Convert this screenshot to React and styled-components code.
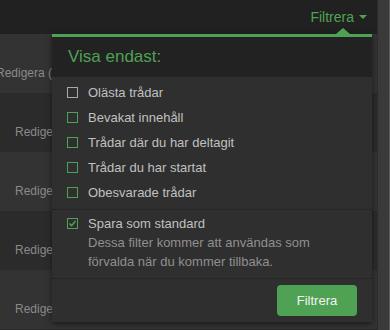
import React from "react";
import styled, { createGlobalStyle } from "styled-components";

const green = "#4fa153";

const GlobalStyle = createGlobalStyle`
  html, body {
    margin: 0;
    padding: 0;
    background: #2a2a2a;
    font-family: "Liberation Sans", Arial, sans-serif;
  }
`;

const Page = styled.div`
  width: 390px;
  height: 330px;
  display: flex;
  position: relative;
  overflow: hidden;
  background: #2a2a2a;
`;

const MainColumn = styled.div`
  flex: 1;
  display: flex;
  flex-direction: column;
  min-width: 0;
  overflow: hidden;
`;

const TopBar = styled.div`
  height: 34px;
  background: #212121;
  display: flex;
  align-items: center;
  justify-content: flex-end;
  padding-right: 10px;
  flex-shrink: 0;
`;

const FilterToggle = styled.span`
  color: ${green};
  font-size: 14px;
  display: flex;
  align-items: center;
  gap: 5px;
`;

const Caret = styled.span`
  width: 0;
  height: 0;
  border-left: 4px solid transparent;
  border-right: 4px solid transparent;
  border-top: 4px solid ${green};
`;

const Row = styled.div`
  height: 59px;
  flex-shrink: 0;
  box-sizing: border-box;
  background: ${({ alt }) => (alt ? "#2b2b2b" : "#333333")};
  padding-top: 31px;
  color: #8a8a8a;
  font-size: 12px;
  line-height: 16px;
  white-space: nowrap;
`;

const RowText = styled.span`
  display: inline-block;
  margin-left: ${({ indent }) => indent}px;
`;

const Scrollbar = styled.div`
  width: 11px;
  background: #3a3a3a;
  border-left: 1px solid #2c2c2c;
  border-right: 1px solid #5a5a5a;
`;

const Dropdown = styled.div`
  position: absolute;
  left: 52px;
  top: 34px;
  width: 320px;
  border-top: 3px solid ${green};
  background: #2f2f2f;
  box-shadow: 0 2px 6px rgba(0, 0, 0, 0.5);
`;

const Arrow = styled.span`
  position: absolute;
  right: 22px;
  top: -9px;
  width: 0;
  height: 0;
  border-left: 7px solid transparent;
  border-right: 7px solid transparent;
  border-bottom: 6px solid ${green};
`;

const Header = styled.div`
  background: #222222;
  color: ${green};
  font-size: 17px;
  height: 40px;
  line-height: 40px;
  padding-left: 16px;
`;

const List = styled.ul`
  list-style: none;
  margin: 0;
  padding: 3px 0 4px 15px;
  border-bottom: 1px dotted #1c1c1c;
`;

const Item = styled.li`
  display: flex;
  align-items: center;
  height: 25px;
  color: #c0c0c0;
  font-size: 13px;
`;

const Box = styled.span`
  width: 9px;
  height: 9px;
  border: 1px solid ${({ muted }) => (muted ? "#a8a8a8" : green)};
  margin-right: 10px;
  margin-top: ${({ offset }) => offset || 0}px;
  flex-shrink: 0;
  display: flex;
  align-items: center;
  justify-content: center;
`;

const SaveSection = styled.div`
  display: flex;
  align-items: flex-start;
  padding: 4px 0 7px 15px;
  border-bottom: 1px dotted #1c1c1c;
`;

const SaveText = styled.div`
  color: #c0c0c0;
  font-size: 13px;
  line-height: 19px;
`;

const Hint = styled.div`
  color: #8f8f8f;
`;

const Footer = styled.div`
  display: flex;
  justify-content: flex-end;
  padding: 6px 15px 6px 0;
`;

const Button = styled.button`
  width: 80px;
  height: 31px;
  border: none;
  border-radius: 4px;
  background: ${green};
  color: #f2f2f2;
  font-family: inherit;
  font-size: 13px;
  cursor: pointer;
`;

const options = [
  { label: "Olästa trådar", muted: true },
  { label: "Bevakat innehåll" },
  { label: "Trådar där du har deltagit" },
  { label: "Trådar du har startat" },
  { label: "Obesvarade trådar" },
];

const rows = [
  { text: "Redigera (", indent: -4, alt: false },
  { text: "Redigera", indent: 15, alt: true },
  { text: "Redigera", indent: 15, alt: false },
  { text: "Redigera", indent: 15, alt: true },
  { text: "Redigera", indent: 15, alt: false },
];

const App = () => (
  <>
    <GlobalStyle />
    <Page>
      <MainColumn>
        <TopBar>
          <FilterToggle>
            Filtrera <Caret />
          </FilterToggle>
        </TopBar>
        {rows.map((r, i) => (
          <Row key={i} alt={r.alt}>
            <RowText indent={r.indent}>{r.text}</RowText>
          </Row>
        ))}
      </MainColumn>
      <Scrollbar />
      <Dropdown>
        <Arrow />
        <Header>Visa endast:</Header>
        <List>
          {options.map((o) => (
            <Item key={o.label}>
              <Box muted={o.muted} />
              {o.label}
            </Item>
          ))}
        </List>
        <SaveSection>
          <Box offset={4}>
            <svg width="9" height="9" viewBox="0 0 9 9">
              <path d="M1.5 4.5 L3.6 6.6 L7.5 2" fill="none" stroke={green} strokeWidth="1.4" />
            </svg>
          </Box>
          <SaveText>
            Spara som standard
            <Hint>
              Dessa filter kommer att användas som
              <br />
              förvalda när du kommer tillbaka.
            </Hint>
          </SaveText>
        </SaveSection>
        <Footer>
          <Button>Filtrera</Button>
        </Footer>
      </Dropdown>
    </Page>
  </>
);

export default App;
